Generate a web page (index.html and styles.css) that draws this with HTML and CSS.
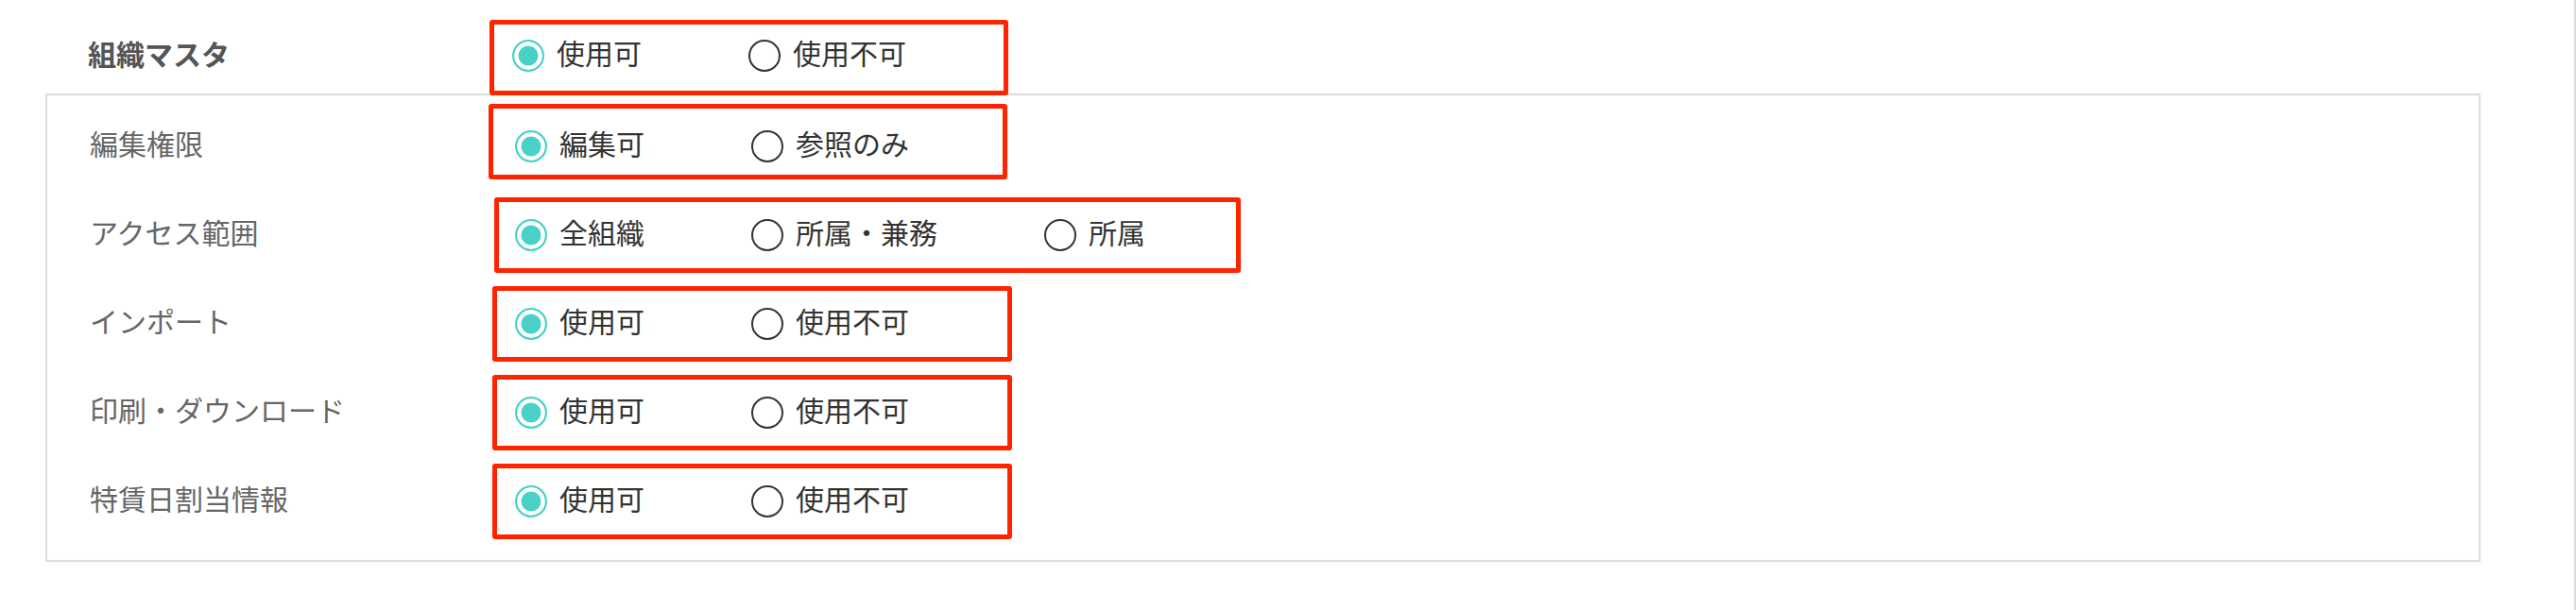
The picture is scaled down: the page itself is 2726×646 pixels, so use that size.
FILE: index.html
```html
<!DOCTYPE html>
<html lang="ja">
<head>
<meta charset="utf-8">
<title>組織マスタ</title>
<link rel="stylesheet" href="styles.css">
</head>
<body>
<div class="page">
  <div class="head-row">
    <div class="head-label">組織マスタ</div>
    <div class="box box--head">
      <label class="opt"><input type="radio" name="org" checked><span class="opt-text">使用可</span></label>
      <label class="opt"><input type="radio" name="org"><span class="opt-text">使用不可</span></label>
    </div>
  </div>
  <div class="panel">
    <div class="row">
      <div class="row-label">編集権限</div>
      <div class="box box--lift">
        <label class="opt"><input type="radio" name="edit" checked><span class="opt-text">編集可</span></label>
        <label class="opt"><input type="radio" name="edit"><span class="opt-text">参照のみ</span></label>
      </div>
    </div>
    <div class="row">
      <div class="row-label">アクセス範囲</div>
      <div class="box box--wide">
        <label class="opt"><input type="radio" name="scope" checked><span class="opt-text">全組織</span></label>
        <label class="opt"><input type="radio" name="scope"><span class="opt-text">所属・兼務</span></label>
        <label class="opt"><input type="radio" name="scope"><span class="opt-text">所属</span></label>
      </div>
    </div>
    <div class="row">
      <div class="row-label">インポート</div>
      <div class="box">
        <label class="opt"><input type="radio" name="imp" checked><span class="opt-text">使用可</span></label>
        <label class="opt"><input type="radio" name="imp"><span class="opt-text">使用不可</span></label>
      </div>
    </div>
    <div class="row">
      <div class="row-label">印刷・ダウンロード</div>
      <div class="box">
        <label class="opt"><input type="radio" name="print" checked><span class="opt-text">使用可</span></label>
        <label class="opt"><input type="radio" name="print"><span class="opt-text">使用不可</span></label>
      </div>
    </div>
    <div class="row">
      <div class="row-label">特賃日割当情報</div>
      <div class="box">
        <label class="opt"><input type="radio" name="special" checked><span class="opt-text">使用可</span></label>
        <label class="opt"><input type="radio" name="special"><span class="opt-text">使用不可</span></label>
      </div>
    </div>
  </div>
</div>
</body>
</html>
```

FILE: styles.css
```css
* {
  box-sizing: border-box;
}

html,
body {
  margin: 0;
  padding: 0;
  background: #fff;
}

body {
  font-family: "Noto Sans CJK JP", "Noto Sans", sans-serif;
}

.page {
  width: 2726px;
  height: 646px;
  border-right: 2px solid #dcdcdc;
  padding-top: 21px;
}

.head-row {
  display: flex;
  align-items: center;
  height: 80px;
  padding-left: 93px;
  margin-bottom: -2px;
}

.head-label {
  width: 425px;
  font-size: 30px;
  line-height: 40px;
  font-weight: 700;
  color: #555;
  margin-bottom: 11px;
}

.panel {
  margin-left: 48px;
  width: 2577px;
  border: 2px solid #dcdcdc;
  padding: 7px 0 15px 45px;
}

.row {
  display: flex;
  align-items: center;
  height: 94px;
}

.row-label {
  width: 426px;
  font-size: 30px;
  line-height: 40px;
  color: #666;
  margin-bottom: 8px;
}

.box {
  position: relative;
  display: flex;
  align-items: center;
  gap: 113px;
  flex: none;
  width: 550px;
  height: 80px;
  border: 5px solid #ff2400;
  border-radius: 3px;
  padding: 0 0 0 19px;
}

.box--head {
  width: 549px;
  padding-bottom: 4px;
}

.box--lift {
  width: 549px;
  margin-left: -4px;
  padding-left: 23px;
  margin-top: -10px;
  padding-top: 10px;
}

.box--wide {
  width: 790px;
  margin-left: 2px;
  padding-left: 17px;
}

.opt {
  display: flex;
  align-items: center;
  gap: 13px;
}

.opt input {
  appearance: none;
  -webkit-appearance: none;
  flex: none;
  margin: 0;
  width: 34px;
  height: 34px;
  border: 2px solid #333;
  border-radius: 50%;
  background: #fff;
}

.opt input:checked {
  border-color: #49d1c8;
  background: #49d1c8;
  box-shadow: inset 0 0 0 4.5px #fff;
}

.opt-text {
  font-size: 30px;
  line-height: 40px;
  color: #333;
  margin-bottom: 9px;
}
```
